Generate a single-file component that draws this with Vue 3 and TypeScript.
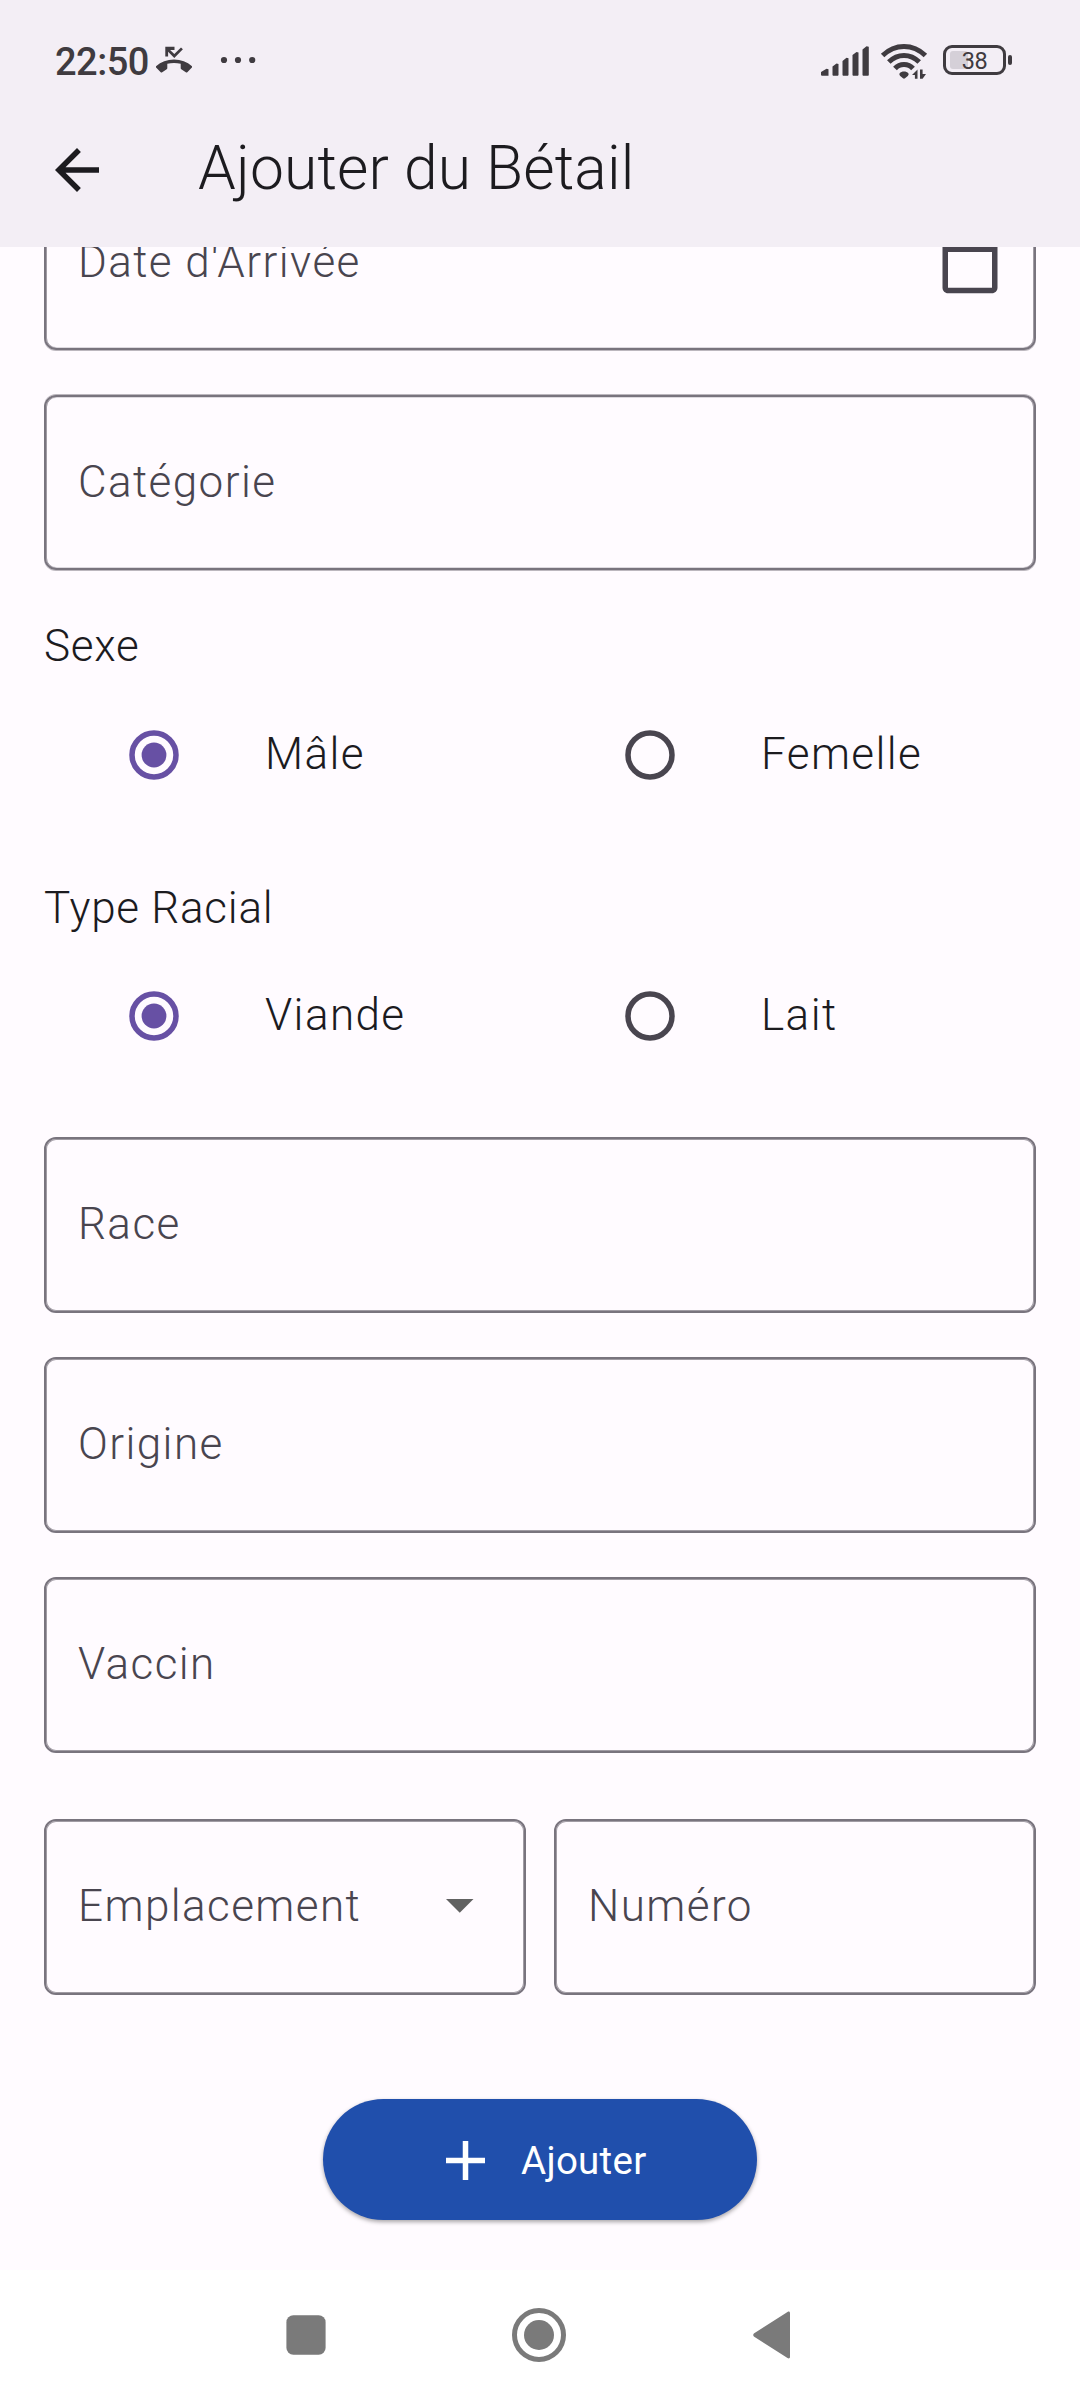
<script setup lang="ts">
import { ref } from 'vue'

interface RadioGroup {
  title: string
  options: string[]
}

const groups: RadioGroup[] = [
  { title: 'Sexe', options: ['Mâle', 'Femelle'] },
  { title: 'Type Racial', options: ['Viande', 'Lait'] },
]
const selected = ref<string[]>(['Mâle', 'Viande'])
const fields: string[] = ['Race', 'Origine', 'Vaccin']

function choose(group: number, option: string): void {
  selected.value[group] = option
}
</script>

<template>
  <div class="screen">
    <header class="top">
      <div class="status">
        <span class="clock">22:50</span>
        <svg class="missed" width="36" height="28" viewBox="0 0 36 28">
          <path d="M9.3 .8h9.2v3.1h-4.4l4.2 4.2L25 1.4l1.9 1.9-8.6 8.6-6.2-6.1v4.7H9.3z" />
          <path d="M0 20.2C5 15.7 11 13.4 18 13.4s13 2.3 18 6.8c.3.5.3 1-.1 1.4l-4.6 4.6c-.5.4-1 .4-1.5 0l-4.5-2.9c-.5-.4-.6-.7-.6-1.3v-4.2c-4.4-1.2-9-1.2-13.4 0V22c0 .6-.1.9-.6 1.3l-4.5 2.9c-.5.4-1 .4-1.5 0L.1 21.6c-.4-.4-.4-.9-.1-1.4z" />
        </svg>
        <svg class="dots" width="36" height="8" viewBox="0 0 36 8">
          <circle cx="4" cy="4" r="3.1" /><circle cx="18" cy="4" r="3.1" /><circle cx="32.2" cy="4" r="3.1" />
        </svg>
        <span class="spacer"></span>
        <svg class="signal" width="50" height="32" viewBox="0 0 50 32">
          <path d="M1 27l5.5-3.3 2 .6V30.7H1.7L1 30zM12.5 21.5l4-3 2 .6v11L18 30.7h-5l-.5-.6zM22.5 16l4-3.3 2 .6v16.8l-.5.6h-5l-.5-.6zM32.5 10l4-3 2 .6v22.5l-.5.6h-5l-.5-.6zM42.5 4.5l4-3.3 2.3.6v28.3l-.5.6h-5.3l-.5-.6z" />
        </svg>
        <svg class="wifi" width="48" height="36" viewBox="0 0 48 36">
          <g fill="none" stroke="#3f3b40" stroke-width="5">
            <path d="M2.6 12.5Q12 3.5 24 3.500t21.400 9" />
            <path d="M8.8 19Q15.500 12.400 24 12.400T39.200 19" />
            <path d="M15 25.500Q18.500 21.500 24 21.500t9 4" />
          </g>
          <path d="M19.500 30.500c2.200-2.600 6.800-2.600 9 0 .3.900 0 1.700-.7 2.400L25 35.300c-.6.5-1.400.5-2 0l-2.800-2.400c-.7-.7-1-1.500-.7-2.400zM37.500 26.500v9.300h-2.600V32H32zM40 26.500h2.600v4.500H46L42.600 35.800H40z" />
        </svg>
        <div class="battery"><span class="level"></span><span class="percent">38</span></div>
        <span class="nub"></span>
      </div>
      <div class="appbar">
        <svg width="66" height="66" viewBox="0 0 24 24" fill="#1c1b1f">
          <path d="M20 11H7.83l5.59-5.59L12 4l-8 8 8 8 1.41-1.41L7.83 13H20v-2z" />
        </svg>
        <h1>Ajouter du Bétail</h1>
      </div>
    </header>

    <main>
      <div class="field soft date">
        <span>Date d'Arrivée</span>
        <svg class="calendar" width="66" height="66" viewBox="0 0 24 24" fill="#49454f">
          <path d="M20 3h-1V1h-2v2H7V1H5v2H4c-1.1 0-2 .9-2 2v16c0 1.100.9 2 2 2h16c1.1 0 2-.9 2-2V5c0-1.100-.9-2-2-2zm0 18H4V8h16v13z" />
        </svg>
      </div>
      <div class="field soft category"><span>Catégorie</span></div>

      <section v-for="(group, g) in groups" :key="group.title" class="group">
        <h2>{{ group.title }}</h2>
        <div class="options">
          <div v-for="option in group.options" :key="option" class="option" @click="choose(g, option)">
            <svg width="50" height="50" viewBox="0 0 50 50" :class="{ on: selected[g] === option }">
              <circle cx="25" cy="25" r="22" fill="none" stroke="currentColor" stroke-width="5.5" />
              <circle v-if="selected[g] === option" cx="25" cy="25" r="12.4" fill="currentColor" />
            </svg>
            <span>{{ option }}</span>
          </div>
        </div>
      </section>

      <div class="stack">
        <div v-for="name in fields" :key="name" class="field"><span>{{ name }}</span></div>
      </div>

      <div class="pair">
        <div class="field">
          <span>Emplacement</span>
          <svg class="caret" width="28" height="14" viewBox="0 0 28 14"><path d="M0 0h27.5L13.75 13.75z" fill="#616161" /></svg>
        </div>
        <div class="field"><span>Numéro</span></div>
      </div>

      <button class="add" type="button">
        <svg width="39" height="39" viewBox="0 0 39 39"><path d="M19.5 0v39M0 19.5h39" stroke="#fff" stroke-width="5.5" /></svg>
        <span>Ajouter</span>
      </button>
    </main>

    <nav>
      <svg width="40" height="40" viewBox="0 0 40 40"><rect x=".4" y=".3" width="39.2" height="39.4" rx="7" /></svg>
      <svg width="54" height="54" viewBox="0 0 54 54">
        <circle cx="27" cy="27" r="24.5" fill="none" stroke="#7a7a7a" stroke-width="5" /><circle cx="27" cy="27" r="15" />
      </svg>
      <svg width="38" height="48" viewBox="0 0 38 48">
        <path d="M1.2 22.3L34.5.9c1.4-.8 2.5-.3 2.5 1.3v43.6c0 1.6-1.1 2.1-2.5 1.3L1.2 25.7c-1.3-.9-1.3-2.5 0-3.4z" />
      </svg>
    </nav>
  </div>
</template>

<style>
body {
  margin: 0;
}
</style>

<style scoped>
.screen {
  width: 1080px;
  height: 2400px;
  display: flex;
  flex-direction: column;
  overflow: hidden;
  background: #fffbff;
  font-family: Roboto, 'Liberation Sans', sans-serif;
  font-size: 44px;
  font-weight: 300;
  line-height: 50px;
  letter-spacing: 1.42px;
  color: #1c1b1f;
}
svg {
  display: block;
  flex: none;
}
.top {
  height: 247px;
  flex: none;
  background: #f3eef5;
}
.status {
  height: 94px;
  box-sizing: border-box;
  padding: 26px 68px 0 55px;
  display: flex;
  align-items: center;
  color: #3f3b40;
  fill: #3f3b40;
}
.clock {
  width: 101px;
  font-size: 38px;
  font-weight: 500;
  letter-spacing: -0.5px;
  padding-top: 4px;
}
.dots {
  margin-left: 28px;
}
.spacer {
  flex: 1;
}
.signal {
  margin-right: 10px;
  margin-top: 2px;
}
.wifi {
  margin-right: 15px;
  margin-top: 1px;
}
.battery {
  position: relative;
  box-sizing: border-box;
  width: 63px;
  height: 30px;
  border: 3px solid #3f3b40;
  border-radius: 9px;
  display: flex;
  align-items: center;
  justify-content: center;
}
.level {
  position: absolute;
  left: 4px;
  top: 3px;
  width: 18px;
  height: 18px;
  border-radius: 3px;
  background: #d5d0d8;
}
.percent {
  position: relative;
  font-size: 23.5px;
  line-height: 24px;
  font-weight: 400;
  letter-spacing: -0.5px;
  padding-top: 1px;
}
.nub {
  width: 4px;
  height: 10px;
  margin-left: 2px;
  border-radius: 2px;
  background: #3f3b40;
}
.appbar {
  box-sizing: border-box;
  height: 153px;
  display: flex;
  align-items: center;
  padding-left: 44px;
}
.appbar svg {
  margin-bottom: 2px;
}
.appbar h1 {
  margin: 0 0 3px 88px;
  font-size: 60.5px;
  font-weight: 300;
  line-height: 72px;
  letter-spacing: 0.16px;
}
main {
  height: 2023px;
  flex: none;
  overflow: hidden;
  padding: 0 44px;
}
.field {
  box-sizing: border-box;
  height: 176px;
  border: 2px solid #79747e;
  border-radius: 12px;
  box-shadow: inset 0 0 0 1px rgba(121, 116, 126, 0.7);
  padding: 0 31px 2px 32px;
  display: flex;
  align-items: center;
  justify-content: space-between;
  color: #49454f;
}
.soft {
  height: 175px;
  box-shadow:
    0 -1px 0 rgba(121, 116, 126, 0.5),
    0 1px 0 rgba(121, 116, 126, 0.5),
    inset 1px 0 0 rgba(121, 116, 126, 0.7),
    inset -1px 0 0 rgba(121, 116, 126, 0.7),
    inset 0 1px 0 rgba(121, 116, 126, 0.25),
    inset 0 -1px 0 rgba(121, 116, 126, 0.25);
}
.date {
  margin-top: -72px;
}
.calendar {
  margin-top: 3px;
}
.category {
  margin-top: 45px;
  margin-bottom: 51px;
}
.group {
  margin-bottom: 44px;
}
.group h2 {
  margin: 0;
  font-size: 44px;
  font-weight: 300;
  line-height: 50px;
  letter-spacing: 0.75px;
}
.options {
  display: grid;
  grid-template-columns: 1fr 1fr;
  height: 168px;
}
.group + .group .options {
  height: 166px;
}
.option {
  display: flex;
  align-items: center;
  padding-left: 85px;
}
.option svg {
  color: #49454f;
}
.option svg.on {
  color: #6750a4;
}
.option span {
  margin-left: 86px;
  padding-bottom: 2px;
}
.stack {
  display: flex;
  flex-direction: column;
  gap: 44px;
  margin-top: -6px;
}
.pair {
  display: grid;
  grid-template-columns: 482px 482px;
  gap: 28px;
  margin-top: 66px;
}
.caret {
  margin-right: 19px;
  margin-bottom: 1px;
}
.add {
  width: 434px;
  height: 121px;
  margin: 104px auto 0;
  padding: 0 0 0 123px;
  border: 0;
  border-radius: 61px;
  background: #204fac;
  box-shadow: 0 2px 4px rgba(0, 0, 0, 0.35);
  color: #fff;
  display: flex;
  align-items: center;
  font-family: inherit;
  font-size: 38.5px;
  font-weight: 400;
  letter-spacing: 0.275px;
}
.add svg {
  margin-top: 1px;
}
.add span {
  margin-left: 36px;
  padding-top: 1px;
}
nav {
  height: 130px;
  flex: none;
  background: #fff;
  fill: #7a7a7a;
  display: flex;
  align-items: center;
  padding-left: 286px;
}
nav svg:nth-child(2) {
  margin-left: 186px;
}
nav svg:nth-child(3) {
  margin-left: 187px;
}
</style>
